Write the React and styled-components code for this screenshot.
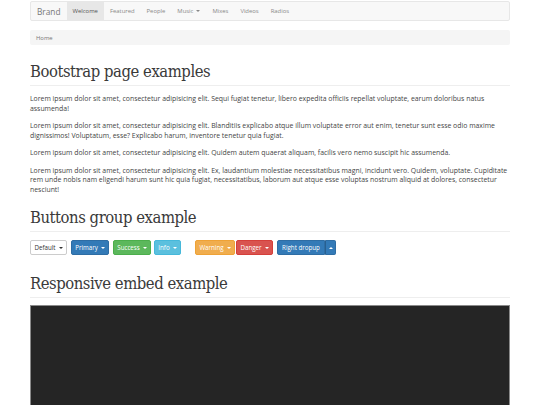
import React from "react";
import styled, { createGlobalStyle } from "styled-components";

const Global = createGlobalStyle`
  html, body { margin: 0; padding: 0; background: #fff; }
  body { font-family: "Open Sans", "Noto Sans", sans-serif; color: #333; }
  * { box-sizing: border-box; }
`;

const Container = styled.div`
  width: 480px;
  margin: 0 auto;
  padding-top: 1px;
`;

const Navbar = styled.nav`
  display: flex;
  align-items: stretch;
  height: 20px;
  background: #f8f8f8;
  border: 1px solid #e7e7e7;
  border-radius: 2px;
`;

const Brand = styled.a`
  display: flex;
  align-items: center;
  padding: 0 6px;
  font-size: 8.3px;
  color: #777;
`;

const NavItem = styled.a`
  display: flex;
  align-items: center;
  padding: 0 6px;
  font-size: 5.9px;
  color: ${(p) => (p.$active ? "#555" : "#888")};
  background: ${(p) => (p.$active ? "#e7e7e7" : "transparent")};
`;

const NavCaret = styled.span`
  display: inline-block;
  margin-left: 3px;
  width: 0;
  height: 0;
  border-top: 2px solid #888;
  border-left: 2px solid transparent;
  border-right: 2px solid transparent;
`;

const Breadcrumb = styled.div`
  margin-top: 9px;
  height: 15px;
  display: flex;
  align-items: center;
  padding: 0 6px;
  background: #f5f5f5;
  border-radius: 2px;
  font-size: 5.9px;
  color: #777;
`;

const Heading = styled.h1`
  font-family: "DejaVu Serif", "Liberation Serif", serif;
  font-stretch: condensed;
  font-weight: normal;
  font-size: 16.5px;
  line-height: 20px;
  color: #3a3a3a;
  margin: ${(p) => p.$mt}px 0 0;
  padding-bottom: 3px;
  border-bottom: 1px solid #eee;
  letter-spacing: -0.45px;
`;

const Paragraph = styled.p`
  font-size: 6.9px;
  line-height: 9.5px;
  margin: ${(p) => p.$mt || 0}px 0 0;
  color: #444;
`;

const Toolbar = styled.div`
  display: flex;
  align-items: center;
  margin-top: 8px;
  height: 15px;
`;

const Group = styled.div`
  display: flex;
  margin-left: ${(p) => p.$ml || 0}px;
`;

const palette = {
  default: { bg: "#fff", border: "#ccc", color: "#333" },
  primary: { bg: "#337ab7", border: "#2e6da4", color: "#fff" },
  success: { bg: "#5cb85c", border: "#4cae4c", color: "#fff" },
  info: { bg: "#5bc0de", border: "#46b8da", color: "#fff" },
  warning: { bg: "#f0ad4e", border: "#eea236", color: "#fff" },
  danger: { bg: "#d9534f", border: "#d43f3a", color: "#fff" },
};

const Btn = styled.button`
  display: flex;
  align-items: center;
  justify-content: center;
  height: 15px;
  width: ${(p) => p.$w}px;
  padding: 0;
  margin-left: ${(p) => p.$ml || 0}px;
  font-family: "Open Sans", "Noto Sans", sans-serif;
  font-size: 6.2px;
  background: ${(p) => palette[p.$kind].bg};
  border: 1px solid ${(p) => palette[p.$kind].border};
  color: ${(p) => palette[p.$kind].color};
  border-radius: ${(p) => p.$radius || "2px"};
`;

const Caret = styled.span`
  display: inline-block;
  margin-left: ${(p) => (p.$up ? 0 : 3)}px;
  width: 0;
  height: 0;
  ${(p) =>
    p.$up
      ? `border-bottom: 2px solid currentColor;`
      : `border-top: 2px solid currentColor;`}
  border-left: 2px solid transparent;
  border-right: 2px solid transparent;
`;

const Embed = styled.div`
  margin-top: 7px;
  height: 270px;
  background: #252525;
  border: 1px solid #8a8a8a;
  border-bottom: none;
`;

const navItems = ["Featured", "People", "Music", "Mixes", "Videos", "Radios"];

export default function App() {
  return (
    <>
      <Global />
      <Container>
        <Navbar>
          <Brand>Brand</Brand>
          <NavItem $active>Welcome</NavItem>
          {navItems.map((n) => (
            <NavItem key={n}>
              {n}
              {n === "Music" && <NavCaret />}
            </NavItem>
          ))}
        </Navbar>
        <Breadcrumb>Home</Breadcrumb>

        <Heading $mt={17}>Bootstrap page examples</Heading>
        <Paragraph $mt={8}>
          Lorem ipsum dolor sit amet, consectetur adipisicing elit. Sequi fugiat tenetur, libero expedita officiis repellat voluptate, earum doloribus natus assumenda!
        </Paragraph>
        <Paragraph $mt={8}>
          Lorem ipsum dolor sit amet, consectetur adipisicing elit. Blanditiis explicabo atque illum voluptate error aut enim, tenetur sunt esse odio maxime dignissimos! Voluptatum, esse? Explicabo harum, inventore tenetur quia fugiat.
        </Paragraph>
        <Paragraph $mt={8}>
          Lorem ipsum dolor sit amet, consectetur adipisicing elit. Quidem autem quaerat aliquam, facilis vero nemo suscipit hic assumenda.
        </Paragraph>
        <Paragraph $mt={8}>
          Lorem ipsum dolor sit amet, consectetur adipisicing elit. Ex, laudantium molestiae necessitatibus magni, incidunt vero. Quidem, voluptate. Cupiditate rem unde nobis nam eligendi harum sunt hic quia fugiat, necessitatibus, laborum aut atque esse voluptas nostrum aliquid at dolores, consectetur nesciunt!
        </Paragraph>

        <Heading $mt={14}>Buttons group example</Heading>
        <Toolbar>
          <Group>
            <Btn $kind="default" $w={37}>Default<Caret /></Btn>
            <Btn $kind="primary" $w={38} $ml={4}>Primary<Caret /></Btn>
            <Btn $kind="success" $w={38} $ml={4}>Success<Caret /></Btn>
            <Btn $kind="info" $w={27} $ml={3}>Info<Caret /></Btn>
          </Group>
          <Group $ml={14}>
            <Btn $kind="warning" $w={40}>Warning<Caret /></Btn>
            <Btn $kind="danger" $w={37} $ml={1}>Danger<Caret /></Btn>
            <Btn $kind="primary" $w={48} $ml={4} $radius="2px 0 0 2px">Right dropup</Btn>
            <Btn $kind="primary" $w={11} $radius="0 2px 2px 0" style={{ borderLeftColor: "#286090" }}>
              <Caret $up />
            </Btn>
          </Group>
        </Toolbar>

        <Heading $mt={19}>Responsive embed example</Heading>
        <Embed />
      </Container>
    </>
  );
}
